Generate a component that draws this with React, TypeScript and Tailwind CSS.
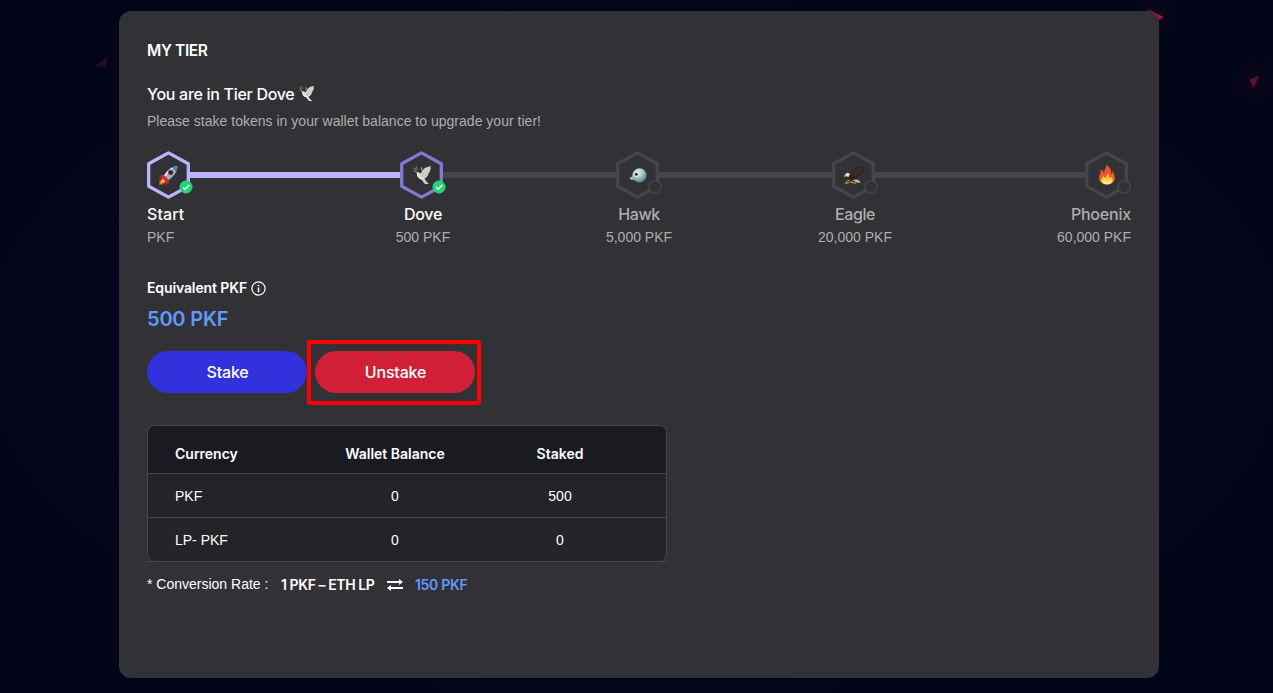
import React from "react";

const heading = "font-[Inter,'DM_Sans',sans-serif]";

function Rocket() {
  return (
    <svg width="21" height="21" viewBox="0 0 21 21">
      <path d="M7 10 2.5 10.2 1 13l4.5-.2zM11 14l-.2 4.5L8 20l-.2-5z" fill="#c9202a" />
      <path d="M5 12 1.5 15.500 1 20l4.500-.8L9 16z" fill="#e2452b" />
      <path d="M4.500 14 2 19 7.500 16z" fill="#ffd84a" />
      <path d="M19.500 1C14 1.500 9 5 5.500 11.500L9.500 15.500C15.500 12 19 7.500 19.500 1z" fill="#8fb4cf" />
      <path d="M19.500 1C14 1.500 9 5 5.500 11.500l1.500 1.500C10.500 7 15 3.500 19.500 1z" fill="#d3e3ec" />
      <path d="M19.500 1c-2 .1-4 .7-5.500 1.500L18 6.500c.9-1.700 1.400-3.500 1.500-5.500z" fill="#4385bb" />
      <path d="m6 10.500 4.500 4.500-1.300 1L5 11.800z" fill="#b52837" />
      <circle cx="12.700" cy="7.500" r="2.700" fill="#a93643" />
      <circle cx="12.700" cy="7.500" r="1.700" fill="#25222c" />
      <path d="m8.500 11.500-3 4" stroke="#db3b34" strokeWidth="1.500" />
    </svg>
  );
}

function Dove({ size = 20 }: { size?: number }) {
  return (
    <svg width={size} height={size} viewBox="0 0 20 20">
      <path d="M18.800 1.200C14 1.500 10.500 4 9 8.500L6 7 3.500 7.500 5 8.300c0 3 2 5.500 5 6.700l2.300 3.500 2.500.7 2-1-2.500-1.400-1.800-3.200c2.800-1.300 3.500-3 4-5.400l1.700-1.900-.7-.5 1.500-2-.8-.4z" fill="#d8d3ce" />
      <path d="M18.500 1.500C14 4 11.500 7 10.300 12.500M17.500 5.500c-2.500 1.500-4 3.500-5.200 6.500" stroke="#b8b1ac" strokeWidth=".6" fill="none" />
      <path d="M10.500 4 9 1.500 9 6z" fill="#b2aaa5" />
      <path d="M5.500 8.500c.2 3.500 2.500 5 5.200 5.600" stroke="#f5f2ee" strokeWidth="1.500" fill="none" />
      <path d="M4.500 8.500C3 7 3 4.500 4.500 2" stroke="#5c7746" strokeWidth=".8" fill="none" />
      <path d="m4.200 1 1 1.500-1 1.200zM1 3l2.500.5-.3 1.300zM5.800 3.500l-2 1.800.3 1zM1.200 6l2.300-.4.500 1.200z" fill="#537f3c" stroke="#537f3c" strokeWidth=".6" />
    </svg>
  );
}

function Hawk() {
  return (
    <svg width="20" height="20" viewBox="0 0 20 20">
      <defs>
        <radialGradient id="hawk" cx=".38" cy=".3" r=".75">
          <stop offset="0" stopColor="#d5e9ea" />
          <stop offset=".5" stopColor="#a0c5ca" />
          <stop offset="1" stopColor="#456e78" />
        </radialGradient>
      </defs>
      <circle cx="11.500" cy="10.500" r="7.200" fill="url(#hawk)" />
      <path d="M6.500 10.200 1 13.200l2 .7.200 1.300L7 14z" fill="#c8c2bd" />
      <path d="m3 13.700 4-.9" stroke="#837c78" strokeWidth=".6" />
      <circle cx="8.300" cy="9.300" r="2.600" fill="#f1eeea" />
      <circle cx="8.300" cy="9.300" r="1.500" fill="#25262b" />
    </svg>
  );
}

function Eagle() {
  return (
    <svg width="21" height="21" viewBox="0 0 21 21">
      <path d="M5 9.500c2.500 1 4 0 4.200-2.300L8.500 5l1.800.3C12 3 14 2.800 16 1.500l-.3 1.200L20 1.500c-.3 2 .7 3-.7 4.300l1 .4c.3 1-1.600 1.400-2.300 2l.7.5c-.2 1-1.900 1.200-3.200 1.500-.5 2.200-1.600 4-3.500 5.300l-3.500.5c-3-.3-4.200-2.500-3.500-6z" fill="#30231f" />
      <path d="M18.500 3.500C14 4.500 12 6.500 11 9.500M17.500 6c-3 .7-4.500 2-5.500 5" stroke="#594136" strokeWidth=".8" fill="none" />
      <path d="M2.500 8.800C3.500 7.500 6 7.600 6.800 9.200L5.500 12 3 11z" fill="#eee8e2" />
      <path d="M2.900 9.200 1.200 10.200l.2 2 1.900-1z" fill="#e7a736" />
      <path d="M11 14.500h3.500l3.500 3-3.200.2-4-1.700z" fill="#c9b7a7" />
      <path d="m6.500 15-3 1.500-1 2 2.800-.7 2.200-1.300M10.500 15.500l-2.500 2 5 .7" stroke="#d4a13b" strokeWidth="1" fill="none" />
    </svg>
  );
}

function Fire() {
  return (
    <svg width="20" height="22" viewBox="0 0 20 22">
      <defs>
        <linearGradient id="fire" x1="0" y1="0" x2="0" y2="1">
          <stop offset="0" stopColor="#e7502b" />
          <stop offset=".6" stopColor="#f4582b" />
          <stop offset="1" stopColor="#fb9a2d" />
        </linearGradient>
        <linearGradient id="flame" x1="0" y1="0" x2="0" y2="1">
          <stop offset="0" stopColor="#f99732" />
          <stop offset=".65" stopColor="#ffd84a" />
          <stop offset="1" stopColor="#fff6b8" />
        </linearGradient>
      </defs>
      <path d="M9.500.800C9.200 4 7 5.500 7.200 9 6 8 6 6.500 6 5 3.500 8 2.300 10.500 2.200 14c0 4 3.500 6.500 7.800 6.500s7.800-2.500 7.800-6.500c0-2.700-1-5-2.300-7.500.2 1.800-.3 3-1.200 4C14.500 6 13 3 9.500.800z" fill="url(#fire)" />
      <path d="M3.500 5.500c1 .8.300 1.900-.2 2.500-.6-.8-.6-1.700.2-2.500z" fill="#e7502b" />
      <path d="M10.500 9c.5 2-1.700 3-2.200 5-1-.8-1.700-1.200-1.800-2.200-1.300 1.700-2 2.700-2 4.200 0 2.800 2.500 4.200 5.500 4.200s5.500-1.400 5.500-4.200c0-1.300-.3-2.500-.9-3.500-.3 1-1 1.500-1.700 1.800C12.800 12.500 12.300 10.500 10.500 9z" fill="url(#flame)" />
    </svg>
  );
}

function Hexagon({ color, link, done, children }: { color: string; link: string; done: boolean; children: React.ReactNode }) {
  return (
    <div className="relative h-12 w-[46px] shrink-0">
      <svg className="block" width="46" height="48" viewBox="0 0 46 48">
        <path d="M42 21h4v6h-4z" fill={link} />
        <path d="M21.500 1.900 41.300 12.800v22.400L21.500 46.100 1.700 35.200V12.800z" fill="#323135" stroke={color} strokeWidth="3.300" strokeLinejoin="round" />
      </svg>
      <div className="absolute inset-y-0 left-0 flex w-[43px] items-center justify-center">{children}</div>
      <svg className="absolute right-0 bottom-[5.500px]" width="14" height="14" viewBox="0 0 14 14">
        {done ? (
          <>
            <circle cx="7" cy="7" r="6.500" fill="#22d476" />
            <path d="m4 7.200 2.100 2L10.300 5" stroke="#fff" strokeWidth="1.500" fill="none" />
          </>
        ) : (
          <circle cx="7" cy="7" r="6.200" fill="#323135" stroke="#45464b" strokeWidth="1.500" />
        )}
      </svg>
    </div>
  );
}

const tiers = [
  { name: "Start", amount: "PKF", icon: <Rocket />, color: "#b8b5ff", link: "#b8b5ff", done: true, before: "hidden", after: "bg-[#b8b5ff]", align: "items-start", tone: "text-white", track: "tracking-[0.1px]" },
  { name: "Dove", amount: "500 PKF", icon: <Dove />, color: "#7f7bd2", link: "#45464b", done: true, before: "bg-[#b8b5ff]", after: "bg-[#45464b]", align: "items-center", tone: "text-white", track: "tracking-[-0.25px]" },
  { name: "Hawk", amount: "5,000 PKF", icon: <Hawk />, color: "#45464b", link: "#45464b", done: false, before: "bg-[#45464b]", after: "bg-[#45464b]", align: "items-center", tone: "text-[#aeaeae]", track: "tracking-[-0.4px]" },
  { name: "Eagle", amount: "20,000 PKF", icon: <Eagle />, color: "#45464b", link: "#45464b", done: false, before: "bg-[#45464b]", after: "bg-[#45464b]", align: "items-center", tone: "text-[#aeaeae]", track: "tracking-[-0.4px]" },
  { name: "Phoenix", amount: "60,000 PKF", icon: <Fire />, color: "#45464b", link: "none", done: false, before: "bg-[#45464b]", after: "hidden", align: "items-end", tone: "text-[#aeaeae]", track: "tracking-[-0.2px]" },
];

export default function App() {
  return (
    <div className="relative h-[693px] w-full overflow-hidden bg-[#020417] bg-[radial-gradient(ellipse_at_center,#050620_0%,#04061c_45%,#020518_75%)] px-[119px] pt-[11px] font-['Liberation_Sans',Arial,sans-serif] text-white">
      <svg className="absolute inset-0" width="1273" height="693" viewBox="0 0 1273 693">
        <defs>
          <radialGradient id="glow">
            <stop offset="0" stopColor="#a01238" stopOpacity=".1" />
            <stop offset="1" stopColor="#a01238" stopOpacity="0" />
          </radialGradient>
        </defs>
        <circle cx="1156" cy="16" r="24" fill="url(#glow)" />
        <circle cx="1254" cy="81" r="24" fill="url(#glow)" />
        <path d="m1147 9 17 8-5 3z" fill="#a01538" />
        <path d="m1249.500 79.500 9.500-3.500-5.500 12z" fill="#5c1230" />
        <path d="m95 66.500 11.500-9.500v9.500z" fill="#260b24" />
      </svg>

      <main className="relative h-[667px] w-[1040px] rounded-[12px] bg-[#323135] px-7 pt-7">
        <h1 className={`${heading} text-[15.500px] leading-6 font-semibold tracking-[-0.4px]`}>MY TIER</h1>
        <div className={`${heading} mt-[19px] flex h-6 items-center gap-1 text-base font-medium`}>
          <span className="tracking-[-0.3px]">You are in Tier Dove</span>
          <span className="mb-[2px]"><Dove size={17} /></span>
        </div>
        <p className="mt-[5px] text-sm leading-5 tracking-[0.015px] text-[#aeaeae]">Please stake tokens in your wallet balance to upgrade your tier!</p>

        <div className="mt-5 grid grid-cols-[168px_216px_216px_216px_168px]">
          {tiers.map((t) => (
            <div key={t.name} className={`flex flex-col ${t.align}`}>
              <div className="flex w-full items-center">
                <div className={`h-[6px] flex-1 ${t.before}`} />
                <Hexagon color={t.color} link={t.link} done={t.done}>{t.icon}</Hexagon>
                <div className={`h-[6px] flex-1 ${t.after}`} />
              </div>
              <div className={`${heading} mt-[3px] text-base leading-6 font-medium ${t.tone} ${t.track}`}>{t.name}</div>
              <div className="mt-px text-sm leading-5 text-[#aeaeae]">{t.amount}</div>
            </div>
          ))}
        </div>

        <div className={`${heading} mt-[31px] flex h-5 items-center gap-1 text-sm font-semibold`}>
          <span className="tracking-[-0.12px]">Equivalent PKF</span>
          <svg width="15" height="15" viewBox="0 0 15 15" fill="none" stroke="#fff">
            <circle cx="7.500" cy="7.500" r="6.600" strokeWidth="1.200" />
            <path d="M7.500 6.500v4.800M7.500 3.700v1.500" strokeWidth="1.500" />
          </svg>
        </div>
        <div className={`${heading} mt-[7px] text-xl leading-7 font-semibold tracking-[-0.2px] text-[#6398ff]`}>500 PKF</div>

        <div className={`${heading} mt-[18px] flex gap-2 text-base font-medium tracking-[-0.2px]`}>
          <button className="h-[42px] w-40 rounded-full bg-[#3232dc] pl-px">Stake</button>
          <div className="relative">
            <button className="h-[42px] w-40 rounded-full bg-[#d01f36] pl-px">Unstake</button>
            <div className="pointer-events-none absolute -top-[11px] -left-[8px] h-[65px] w-[174px] rounded-[3px] border-4 border-[#ff0000]" />
          </div>
        </div>

        <div className="mt-8 w-[520px] border-b border-[#45454a]">
          <div className="overflow-hidden rounded-lg border border-b-0 border-[#45454a] bg-[#242328] text-sm">
            <div className={`${heading} grid h-[48px] grid-cols-[164px_166px_164px] items-center border-b border-[#45454a] bg-[#1a1b20] pt-2 text-sm font-semibold`}>
              <span className="pl-[27px]">Currency</span>
              <span className="text-center">Wallet Balance</span>
              <span className="text-center">Staked</span>
            </div>
            <div className="grid h-11 grid-cols-[164px_166px_164px] items-center border-b border-[#45454a]">
              <span className="pl-[27px]">PKF</span>
              <span className="text-center">0</span>
              <span className="text-center">500</span>
            </div>
            <div className="grid h-[43px] grid-cols-[164px_166px_164px] items-center">
              <span className="pl-[27px]">LP- PKF</span>
              <span className="text-center">0</span>
              <span className="text-center">0</span>
            </div>
          </div>
        </div>

        <div className="mt-[13px] flex h-5 items-center text-sm">
          <span className="mb-[2px] w-[134px]">* Conversion Rate :</span>
          <span className={`${heading} w-[106px] text-sm font-semibold tracking-[-0.42px]`}>1 PKF – ETH LP</span>
          <svg width="16" height="12" viewBox="0 0 16 12" fill="none" stroke="#fff" strokeWidth="1.800">
            <path d="M0 3h13M16 9H3" />
            <path d="m12 0 4 3-4 3zM4 6 0 9l4 3z" fill="#fff" stroke="none" />
          </svg>
          <span className={`${heading} ml-3 text-sm font-semibold tracking-[-0.3px] text-[#6398ff]`}>150 PKF</span>
        </div>
      </main>
    </div>
  );
}
